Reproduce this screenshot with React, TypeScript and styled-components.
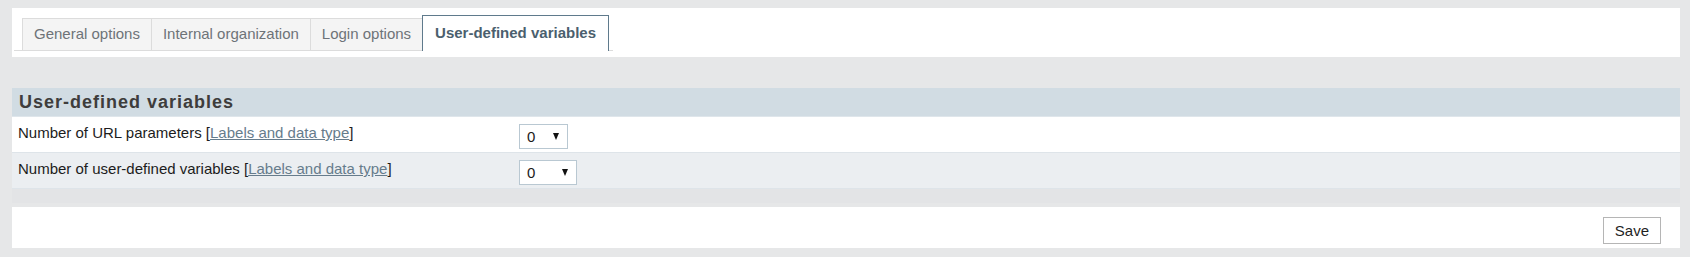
import React from 'react';
import styled, { createGlobalStyle } from 'styled-components';

const GlobalStyle = createGlobalStyle`
  html, body {
    margin: 0;
    padding: 0;
    background: #e6e7e8;
  }
  body {
    font-family: "Liberation Sans", Arial, sans-serif;
    font-size: 15px;
    color: #1f1f1f;
  }
`;

const Page = styled.div`
  padding: 8px 10px 9px 12px;
`;

const TopPanel = styled.div`
  background: #ffffff;
  padding: 7px 0 6px 2px;
`;

const TabList = styled.ul`
  display: inline-flex;
  align-items: flex-end;
  margin: 0;
  padding: 0 5px 0 8px;
  list-style: none;
  border-bottom: 1px solid #dcdcdc;
`;

const Tab = styled.li<{ $active?: boolean }>`
  padding: ${({ $active }) => ($active ? '0 12px 1px' : '0 11px 2px')};
  line-height: ${({ $active }) => ($active ? '34px' : '29px')};
  margin-bottom: ${({ $active }) => ($active ? '-1px' : '0')};
  margin-right: -1px;
  border: 1px solid ${({ $active }) => ($active ? '#5f7a8c' : '#dcdcdc')};
  border-bottom: none;
  background: ${({ $active }) => ($active ? '#ffffff' : '#f4f4f4')};
  color: ${({ $active }) => ($active ? '#4b5f6e' : '#6e7378')};
  font-weight: ${({ $active }) => ($active ? 700 : 400)};
  white-space: nowrap;
  cursor: pointer;
  position: relative;
  z-index: ${({ $active }) => ($active ? 1 : 0)};
`;

const Section = styled.section`
  margin-top: 31px;
  background: #e3e4e6;
  padding-bottom: 14px;
`;

const SectionTitle = styled.h2`
  margin: 0;
  padding: 1px 7px 0;
  height: 27px;
  line-height: 27px;
  background: #d1dce3;
  border-bottom: 1px solid #dfe6eb;
  color: #3e3d3c;
  font-size: 18px;
  font-weight: 700;
  letter-spacing: 1px;
`;

const Row = styled.div<{ $alt?: boolean }>`
  display: grid;
  grid-template-columns: 501px 1fr;
  align-items: start;
  box-sizing: border-box;
  height: 36px;
  padding: 7px 6px 0;
  background: ${({ $alt }) => ($alt ? '#ebeef1' : '#ffffff')};
  border-bottom: 1px solid #dee4e9;
`;

const Label = styled.div`
  line-height: 18px;
  color: #1c1c1c;
`;

const DocLink = styled.a`
  color: #667c8c;
  text-decoration: underline;
  cursor: pointer;
`;

const SelectWrap = styled.div<{ $width: number }>`
  position: relative;
  width: ${({ $width }) => $width}px;
  height: 25px;
`;

const NativeSelect = styled.select`
  appearance: none;
  -webkit-appearance: none;
  box-sizing: border-box;
  width: 100%;
  height: 100%;
  margin: 0;
  padding: 0 0 0 7px;
  border: 1px solid #b9c8d2;
  border-radius: 0;
  background: #ffffff;
  color: #1b1b1b;
  font-family: "Liberation Sans", Arial, sans-serif;
  font-size: 15px;
  outline: none;
`;

const Caret = styled.span`
  position: absolute;
  right: 9px;
  top: 9px;
  width: 0;
  height: 0;
  border-left: 3.5px solid transparent;
  border-right: 3.5px solid transparent;
  border-top: 7px solid #111111;
  pointer-events: none;
`;

const BottomPanel = styled.div`
  display: flex;
  justify-content: flex-end;
  margin-top: 4px;
  padding: 10px 19px 4px 0;
  background: #ffffff;
`;

const SaveButton = styled.button`
  box-sizing: border-box;
  height: 27px;
  padding: 0 11px;
  border: 1px solid #b5b5b5;
  background: #ffffff;
  color: #1f1f1f;
  font-family: "Liberation Sans", Arial, sans-serif;
  font-size: 15px;
  cursor: pointer;
`;

const tabs = ['General options', 'Internal organization', 'Login options', 'User-defined variables'];

const rows = [
  { label: 'Number of URL parameters', width: 49, max: 9 },
  { label: 'Number of user-defined variables', width: 58, max: 50 },
];

const CountSelect: React.FC<{ width: number; max: number }> = ({ width, max }) => (
  <SelectWrap $width={width}>
    <NativeSelect defaultValue="0">
      {Array.from({ length: max + 1 }, (_, i) => (
        <option key={i} value={i}>
          {i}
        </option>
      ))}
    </NativeSelect>
    <Caret />
  </SelectWrap>
);

export default function App() {
  return (
    <>
      <GlobalStyle />
      <Page>
        <TopPanel>
          <TabList>
            {tabs.map((t, i) => (
              <Tab key={t} $active={i === tabs.length - 1}>
                {t}
              </Tab>
            ))}
          </TabList>
        </TopPanel>

        <Section>
          <SectionTitle>User-defined variables</SectionTitle>
          {rows.map((r, i) => (
            <Row key={r.label} $alt={i % 2 === 1}>
              <Label>
                {r.label} [<DocLink>Labels and data type</DocLink>]
              </Label>
              <CountSelect width={r.width} max={r.max} />
            </Row>
          ))}
        </Section>

        <BottomPanel>
          <SaveButton>Save</SaveButton>
        </BottomPanel>
      </Page>
    </>
  );
}
